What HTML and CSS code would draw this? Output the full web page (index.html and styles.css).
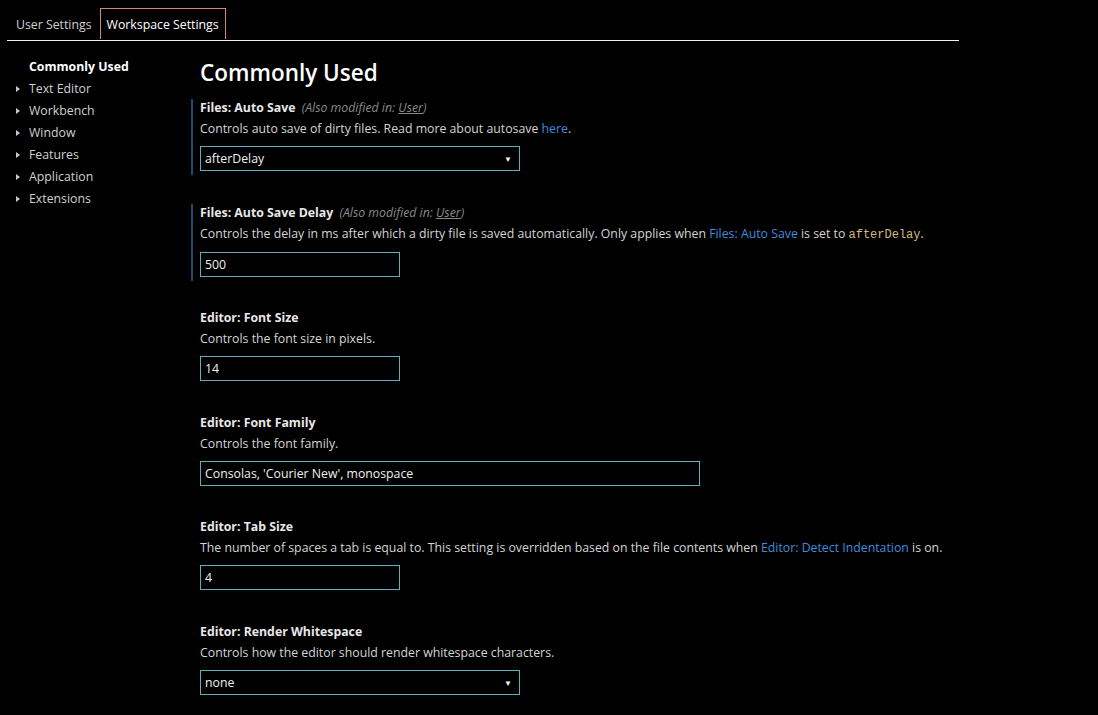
FILE: index.html
```html
<!DOCTYPE html>
<html lang="en">
<head>
    <meta charset="UTF-8">
    <title>Settings</title>
    <link rel="stylesheet" href="styles.css">
</head>
<body>
    <div class="tabs">
        <div class="tab">User Settings</div>
        <div class="tab active">Workspace Settings</div>
    </div>

    <div class="content">
        <div class="sidebar">
            <div class="nav-item current">Commonly Used</div>
            <div class="nav-item"><span class="twisty"></span>Text Editor</div>
            <div class="nav-item"><span class="twisty"></span>Workbench</div>
            <div class="nav-item"><span class="twisty"></span>Window</div>
            <div class="nav-item"><span class="twisty"></span>Features</div>
            <div class="nav-item"><span class="twisty"></span>Application</div>
            <div class="nav-item"><span class="twisty"></span>Extensions</div>
        </div>

        <div class="main">
            <h1>Commonly Used</h1>

            <div class="setting modified">
                <div class="title">Files: Auto Save <span class="other">(Also modified in: <u>User</u>)</span></div>
                <div class="desc">Controls auto save of dirty files. Read more about autosave <a href="#">here</a>.</div>
                <div class="control select w320"><span>afterDelay</span><span class="arrow">▼</span></div>
            </div>

            <div class="setting modified">
                <div class="title">Files: Auto Save Delay <span class="other">(Also modified in: <u>User</u>)</span></div>
                <div class="desc">Controls the delay in ms after which a dirty file is saved automatically. Only applies when <a href="#">Files: Auto Save</a> is set to <code>afterDelay</code>.</div>
                <div class="control w200">500</div>
            </div>

            <div class="setting">
                <div class="title">Editor: Font Size</div>
                <div class="desc">Controls the font size in pixels.</div>
                <div class="control w200">14</div>
            </div>

            <div class="setting">
                <div class="title">Editor: Font Family</div>
                <div class="desc">Controls the font family.</div>
                <div class="control w500">Consolas, 'Courier New', monospace</div>
            </div>

            <div class="setting">
                <div class="title">Editor: Tab Size</div>
                <div class="desc">The number of spaces a tab is equal to. This setting is overridden based on the file contents when <a href="#">Editor: Detect Indentation</a> is on.</div>
                <div class="control w200">4</div>
            </div>

            <div class="setting">
                <div class="title">Editor: Render Whitespace</div>
                <div class="desc">Controls how the editor should render whitespace characters.</div>
                <div class="control select w320"><span>none</span><span class="arrow">▼</span></div>
            </div>
        </div>
    </div>
</body>
</html>
```

FILE: styles.css
```css
body {
    margin: 0;
    background-color: #000;
    color: #d4d4d4;
    font-family: "Open Sans", "Noto Sans", sans-serif;
    font-size: 12.3px;
    overflow: hidden;
}
.tabs {
    display: flex;
    margin: 8px 0 0 7px;
    width: 951px;
    border-bottom: 1px solid #f0f0f0;
    padding-left: 1px;
    gap: 0;
}
.tab {
    height: 30px;
    line-height: 31px;
    padding: 0 7px;
    border: 1px solid transparent;
    border-bottom: none;
    color: #d0d0d0;
}
.tab.active {
    border-color: #d88a6e;
    color: #fff;
    margin-bottom: 1px;
    padding: 0 6px;
}
.content {
    display: flex;
    padding-top: 15px;
}
.sidebar {
    width: 191px;
    flex-shrink: 0;
}
.nav-item {
    height: 22px;
    line-height: 22px;
    padding-left: 16px;
    display: flex;
    align-items: center;
    color: #d0d0d0;
}
.nav-item.current {
    padding-left: 29px;
    font-weight: bold;
    color: #fff;
}
.twisty {
    width: 0;
    height: 0;
    border-left: 4px solid #c8c8c8;
    border-top: 3.5px solid transparent;
    border-bottom: 3.5px solid transparent;
    margin-right: 9px;
}
.main h1 {
    margin: 2px 0 11px 9px;
    font-size: 22.5px;
    line-height: 30px;
    font-weight: 600;
    color: #fff;
}
.setting {
    border-left: 2px solid transparent;
    padding: 0 0 4px 7px;
    margin-bottom: 28.6px;
}
.setting.modified {
    border-left-color: #1f4a78;
}
.title {
    line-height: 18px;
    font-weight: bold;
    color: #e8e8e8;
}
.other {
    font-weight: normal;
    font-style: italic;
    color: #8a8a8a;
    margin-left: 3px;
}
.desc {
    margin-top: 2px;
    line-height: 20px;
    white-space: nowrap;
}
.desc a {
    color: #3f8ddb;
    text-decoration: none;
}
code {
    font-family: "Liberation Mono", "DejaVu Sans Mono", monospace;
    font-size: 12px;
    color: #d7ba7d;
}
.control {
    margin-top: 7px;
    height: 23px;
    line-height: 24px;
    border: 1px solid #64adbd;
    padding: 0 4px;
    box-sizing: content-box;
    color: #f0f0f0;
}
.w200 { width: 190px; }
.w320 { width: 310px; }
.w500 { width: 490px; }
.select {
    display: flex;
    justify-content: space-between;
}
.arrow {
    font-size: 8px;
    margin-right: 3px;
}
```
